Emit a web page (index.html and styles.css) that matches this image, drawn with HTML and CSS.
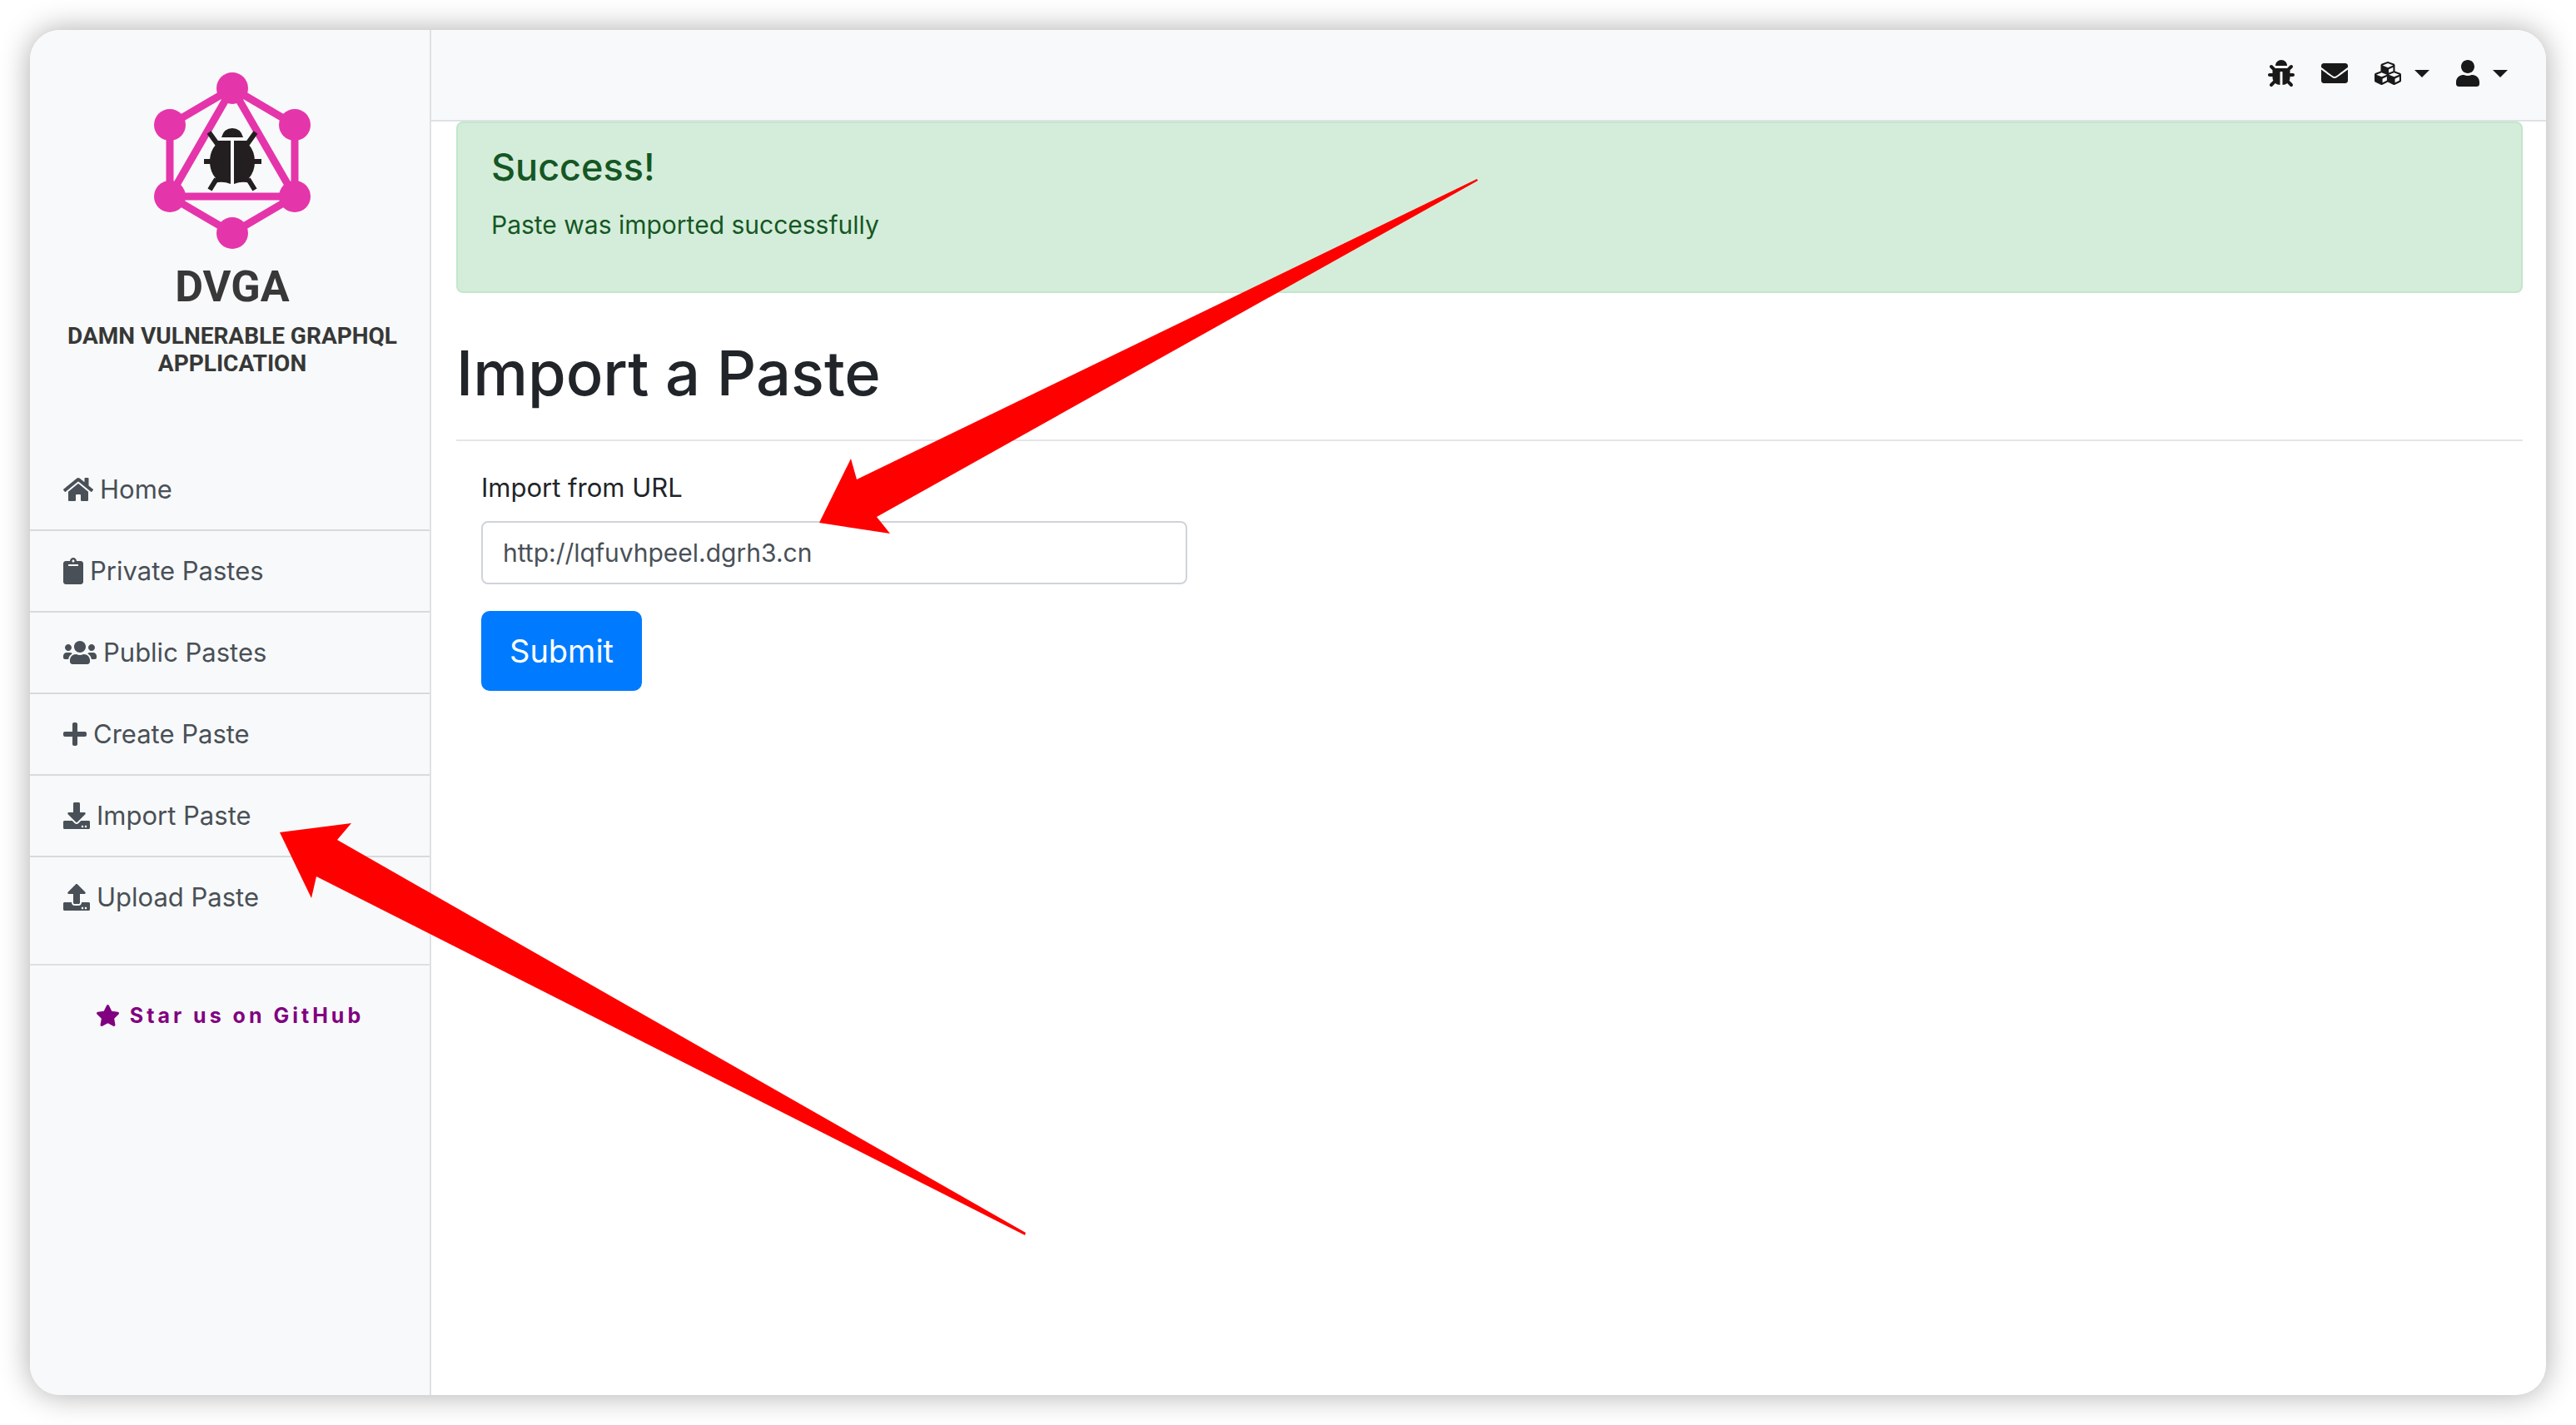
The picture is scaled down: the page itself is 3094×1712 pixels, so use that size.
FILE: index.html
```html
<!DOCTYPE html>
<html lang="en">
<head>
<meta charset="utf-8">
<title>Damn Vulnerable GraphQL Application</title>
<link rel="stylesheet" href="styles.css">
</head>
<body>
<div class="window">
  <aside class="sidebar">
    <div class="logo">
      <svg class="logo-mark" viewBox="0 0 192 216" aria-hidden="true">
        <g fill="none" stroke="#e535ab" stroke-width="9">
          <path d="M96 21 171 65V151L96 195 21 151V65Z"/>
          <path d="M96 21 171 151H21Z"/>
        </g>
        <g fill="#e535ab">
          <circle cx="96" cy="21" r="19"/><circle cx="171" cy="65" r="19"/><circle cx="171" cy="151" r="19"/>
          <circle cx="96" cy="195" r="19"/><circle cx="21" cy="151" r="19"/><circle cx="21" cy="65" r="19"/>
        </g>
        <g fill="#231f20">
          <path d="M83 80Q86 69 96 69T109 80Z"/>
          <path d="M76 84H94V136Q84 132 75 135L76 129Q69 121 69 109 69 97 76 89Z"/>
          <path d="M116 84H98V136Q108 132 117 135L116 129Q123 121 123 109 123 97 116 89Z"/>
        </g>
        <path fill="none" stroke="#231f20" stroke-width="6" d="M68 74 78 88M124 74 114 88M62 109H72M131 109H120M69 143 77 130M123 143 115 130"/>
      </svg>
      <div class="logo-name">DVGA</div>
      <div class="logo-caption">DAMN VULNERABLE GRAPHQL<br>APPLICATION</div>
    </div>
    <nav class="menu">
      <a class="menu-item" href="#"><svg class="icon w36" viewBox="0 0 576 512"><path d="M280.37 148.26L96 300.11V464a16 16 0 0 0 16 16l112.06-.29a16 16 0 0 0 15.92-16V368a16 16 0 0 1 16-16h64a16 16 0 0 1 16 16v95.64a16 16 0 0 0 16 16.05L464 480a16 16 0 0 0 16-16V300L295.67 148.26a12.19 12.19 0 0 0-15.3 0zM571.6 251.47L488 182.56V44.05a12 12 0 0 0-12-12h-56a12 12 0 0 0-12 12v72.61L318.47 43a48 48 0 0 0-61 0L4.34 251.47a12 12 0 0 0-1.6 16.9l25.5 31A12 12 0 0 0 45.15 301l235.22-193.74a12.19 12.19 0 0 1 15.3 0L530.9 301a12 12 0 0 0 16.9-1.6l25.5-31a12 12 0 0 0-1.7-16.93z"/></svg>Home</a>
      <a class="menu-item" href="#"><svg class="icon w24" viewBox="0 0 384 512"><path d="M384 112v352c0 26.51-21.49 48-48 48H48c-26.51 0-48-21.49-48-48V112c0-26.51 21.49-48 48-48h80c0-35.29 28.71-64 64-64s64 28.71 64 64h80c26.51 0 48 21.49 48 48zM192 40c-13.255 0-24 10.745-24 24s10.745 24 24 24 24-10.745 24-24-10.745-24-24-24m96 114v-20a6 6 0 0 0-6-6H102a6 6 0 0 0-6 6v20a6 6 0 0 0 6 6h180a6 6 0 0 0 6-6z"/></svg>Private Pastes</a>
      <a class="menu-item" href="#"><svg class="icon w40" viewBox="0 0 640 512"><path d="M96 224c35.3 0 64-28.7 64-64s-28.7-64-64-64-64 28.7-64 64 28.7 64 64 64zm448 0c35.3 0 64-28.7 64-64s-28.7-64-64-64-64 28.7-64 64 28.7 64 64 64zm32 32h-64c-17.6 0-33.5 7.1-45.1 18.6 40.3 22.1 68.9 62 75.1 109.4h66c17.7 0 32-14.3 32-32v-32c0-35.3-28.7-64-64-64zm-256 0c61.9 0 112-50.1 112-112S381.9 32 320 32 208 82.1 208 144s50.1 112 112 112zm76.8 32h-8.3c-20.8 10-43.9 16-68.5 16s-47.6-6-68.5-16h-8.3C179.6 288 128 339.6 128 403.2V432c0 26.5 21.5 48 48 48h288c26.5 0 48-21.5 48-48v-28.8c0-63.6-51.6-115.2-115.2-115.2zm-223.7-13.4C161.5 263.1 145.6 256 128 256H64c-35.3 0-64 28.7-64 64v32c0 17.7 14.3 32 32 32h65.9c6.3-47.4 34.9-87.3 75.2-109.4z"/></svg>Public Pastes</a>
      <a class="menu-item" href="#"><svg class="icon w28" viewBox="0 0 448 512"><path d="M416 208H272V64c0-17.67-14.33-32-32-32h-32c-17.67 0-32 14.33-32 32v144H32c-17.67 0-32 14.33-32 32v32c0 17.67 14.33 32 32 32h144v144c0 17.67 14.33 32 32 32h32c17.67 0 32-14.33 32-32V304h144c17.67 0 32-14.33 32-32v-32c0-17.67-14.33-32-32-32z"/></svg>Create Paste</a>
      <a class="menu-item" href="#"><svg class="icon w32" viewBox="0 0 512 512"><path d="M216 0h80c13.3 0 24 10.7 24 24v168h87.7c17.8 0 26.7 21.5 14.1 34.1L269.7 378.3c-7.5 7.5-19.8 7.5-27.3 0L90.1 226.1c-12.6-12.6-3.7-34.1 14.1-34.1H192V24c0-13.3 10.7-24 24-24zm296 376v112c0 13.3-10.7 24-24 24H24c-13.3 0-24-10.7-24-24V376c0-13.3 10.7-24 24-24h146.7l49 49c20.1 20.1 52.5 20.1 72.6 0l49-49H488c13.3 0 24 10.7 24 24zm-124 88c0-11-9-20-20-20s-20 9-20 20 9 20 20 20 20-9 20-20zm64 0c0-11-9-20-20-20s-20 9-20 20 9 20 20 20 20-9 20-20z"/></svg>Import Paste
        <svg class="arrow arrow-menu" viewBox="0 0 896 496" aria-hidden="true"><path d="M0 12 86 1 69 21 896 493 895 496 44 65 38 91Z"/></svg></a>
      <a class="menu-item" href="#"><svg class="icon w32" viewBox="0 0 512 512"><path d="M296 384h-80c-13.3 0-24-10.7-24-24V192h-87.7c-17.8 0-26.7-21.5-14.1-34.1L242.3 5.7c7.5-7.5 19.8-7.5 27.3 0l152.2 152.2c12.6 12.6 3.7 34.1-14.1 34.1H320v168c0 13.3-10.7 24-24 24zm216-8v112c0 13.3-10.7 24-24 24H24c-13.3 0-24-10.7-24-24V376c0-13.3 10.7-24 24-24h136v8c0 30.9 25.1 56 56 56h80c30.9 0 56-25.1 56-56v-8h136c13.3 0 24 10.7 24 24zm-124 88c0-11-9-20-20-20s-20 9-20 20 9 20 20 20 20-9 20-20zm64 0c0-11-9-20-20-20s-20 9-20 20 9 20 20 20 20-9 20-20z"/></svg>Upload Paste</a>
    </nav>
    <a class="star" href="#"><svg class="star-icon" viewBox="0 0 576 512"><path d="M259.3 17.8L194 150.2 47.9 171.5c-26.2 3.8-36.7 36.1-17.7 54.6l105.7 103-25 145.5c-4.5 26.3 23.2 46 46.4 33.7L288 439.6l130.7 68.7c23.2 12.2 50.9-7.4 46.4-33.7l-25-145.5 105.7-103c19-18.5 8.5-50.8-17.7-54.6L382 150.2 316.7 17.8c-11.7-23.6-45.6-23.9-57.4 0z"/></svg>Star us on GitHub</a>
  </aside>
  <div class="page">
    <header class="topbar">
      <a class="tool" href="#" aria-label="Report a bug"><svg class="icon w32" viewBox="0 0 512 512"><path d="M511.988 288.9c-.478 17.43-15.217 31.1-32.653 31.1H424v16c0 21.864-4.882 42.584-13.6 61.145l60.228 60.228c12.496 12.497 12.496 32.758 0 45.255-12.498 12.497-32.759 12.496-45.256 0l-54.736-54.736C345.886 467.965 314.351 480 280 480V236c0-6.627-5.373-12-12-12h-24c-6.627 0-12 5.373-12 12v244c-34.351 0-65.886-12.035-90.636-32.108l-54.736 54.736c-12.498 12.497-32.759 12.496-45.256 0-12.496-12.497-12.496-32.758 0-45.255l60.228-60.228C92.882 378.584 88 357.864 88 336v-16H32.666C15.23 320 .491 306.33.013 288.9-.484 270.816 14.028 256 32 256h56v-58.745l-46.628-46.628c-12.496-12.497-12.496-32.758 0-45.255 12.498-12.497 32.758-12.497 45.256 0L141.255 160h229.489l54.627-54.627c12.498-12.497 32.758-12.497 45.256 0 12.496 12.497 12.496 32.758 0 45.255L424 197.255V256h56c17.972 0 32.484 14.816 31.988 32.9zM257 0c-61.856 0-112 50.144-112 112h224C369 50.144 318.856 0 257 0z"/></svg></a>
      <a class="tool" href="#" aria-label="Messages"><svg class="icon w32" viewBox="0 0 512 512"><path d="M502.3 190.8c3.9-3.1 9.7-.2 9.7 4.7V400c0 26.5-21.5 48-48 48H48c-26.5 0-48-21.5-48-48V195.6c0-5 5.7-7.8 9.7-4.7 22.4 17.4 52.1 39.5 154.1 113.6 21.1 15.4 56.7 47.8 92.2 47.6 35.7.3 72-32.8 92.3-47.6 102-74.1 131.6-96.3 154-113.7zM256 320c23.2.4 56.6-29.2 73.4-41.4 132.7-96.3 142.8-104.7 173.4-128.7 5.8-4.5 9.2-11.5 9.2-18.9v-19c0-26.5-21.5-48-48-48H48c-26.5 0-48 21.5-48 48v19c0 7.4 3.4 14.3 9.2 18.9 30.6 23.9 40.7 32.4 173.4 128.7 16.8 12.2 50.2 41.8 73.4 41.4z"/></svg></a>
      <button class="tool" type="button" aria-label="Modules"><svg class="icon w32" viewBox="0 0 512 512"><path d="M488.6 250.2L392 214V105.5c0-15-9.3-28.4-23.4-33.7l-100-37.5c-8.1-3.1-17.1-3.1-25.3 0l-100 37.5c-14.1 5.3-23.4 18.7-23.4 33.7V214l-96.6 36.2C9.3 255.5 0 268.9 0 283.9V394c0 13.6 7.7 26.1 19.9 32.2l100 50c10.1 5.1 22.1 5.1 32.2 0l103.9-52 103.9 52c10.1 5.1 22.1 5.1 32.2 0l100-50c12.2-6.1 19.9-18.6 19.9-32.2V283.9c0-15-9.3-28.4-23.4-33.7zM358 214.8l-85 31.9v-68.2l85-37v73.3zM154 104.1l102-38.2 102 38.2v.6l-102 41.4-102-41.4v-.6zm84 291.1l-85 42.5v-79.1l85-38.8v75.4zm0-112l-102 41.4-102-41.4v-.6l102-38.2 102 38.2v.6zm240 112l-85 42.5v-79.1l85-38.8v75.4zm0-112l-102 41.4-102-41.4v-.6l102-38.2 102 38.2v.6z"/></svg><span class="caret"></span></button>
      <button class="tool" type="button" aria-label="Account"><svg class="icon w28" viewBox="0 0 448 512"><path d="M224 256c70.7 0 128-57.3 128-128S294.7 0 224 0 96 57.3 96 128s57.3 128 128 128zm89.6 32h-16.7c-22.2 10.2-46.9 16-72.9 16s-50.6-5.8-72.9-16h-16.7C60.2 288 0 348.2 0 422.4V464c0 26.5 21.5 48 48 48h352c26.5 0 48-21.5 48-48v-41.6c0-74.2-60.2-134.4-134.4-134.4z"/></svg><span class="caret"></span></button>
    </header>
    <main class="content">
      <div class="alert" role="alert">
        <h4 class="alert-title">Success!</h4>
        <p class="alert-text">Paste was imported successfully</p>
      </div>
      <h1 class="title">Import a Paste</h1>
      <form class="form">
        <label class="label" for="url">Import from URL</label>
        <div class="field">
          <input class="input" id="url" type="text" value="http://lqfuvhpeel.dgrh3.cn">
          <svg class="arrow arrow-field" viewBox="0 0 792 426" aria-hidden="true"><path d="M0 413 38 336 45 361 790 0 791 2 69 406 85 426Z"/></svg>
        </div>
        <button class="submit" type="submit">Submit</button>
      </form>
    </main>
  </div>
</div>
</body>
</html>
```
FILE: styles.css
```css
* {
  box-sizing: border-box;
}

body {
  margin: 0;
  padding: 36px;
  min-height: 100vh;
  display: flex;
  background: #fff;
  color: #212529;
  font-family: Inter, "Liberation Sans", sans-serif;
  font-size: 31px;
  line-height: 48px;
}

.window {
  flex: 1;
  display: flex;
  min-width: 0;
  overflow: hidden;
  background: #fff;
  border-radius: 36px;
  box-shadow: 0 0 36px rgba(0, 0, 0, 0.33);
}

/* Sidebar */
.sidebar {
  flex: none;
  width: 482px;
  background: #f8f9fa;
  border-right: 2px solid #dee2e6;
}

.logo {
  display: flex;
  flex-direction: column;
  align-items: center;
  padding: 49px 0 87px 6px;
  color: #373837;
  font-family: Roboto, "Liberation Sans", sans-serif;
  font-weight: 700;
  text-align: center;
}

.logo-mark {
  width: 192px;
  height: 216px;
}

.logo-name {
  margin-top: 16px;
  font-size: 52px;
  line-height: 56px;
}

.logo-caption {
  margin-top: 14px;
  font-size: 28px;
  line-height: 33px;
}

.menu {
  padding-bottom: 32px;
  border-bottom: 2px solid #dfe0e2;
}

.menu-item {
  position: relative;
  display: flex;
  align-items: center;
  gap: 8px;
  padding: 24px 40px;
  color: #495057;
  text-decoration: none;
}

.menu-item + .menu-item {
  border-top: 2px solid #d9dadc;
}

.icon {
  flex: none;
  height: 32px;
  fill: currentColor;
}

.w24 { width: 24px; }
.w28 { width: 28px; }
.w32 { width: 32px; }
.w36 { width: 36px; }
.w40 { width: 40px; }

.star {
  display: flex;
  align-items: center;
  justify-content: center;
  gap: 12px;
  padding: 36px 0;
  color: purple;
  font-size: 25px;
  font-weight: 700;
  letter-spacing: 4px;
  text-decoration: none;
}

.star-icon {
  width: 29px;
  height: 26px;
  fill: currentColor;
}

/* Top bar */
.page {
  flex: 1;
  min-width: 0;
}

.topbar {
  display: flex;
  justify-content: flex-end;
  gap: 32px;
  padding: 36px 46px 40px;
  background: #f8f9fa;
  border-bottom: 2px solid #dee2e6;
}

.tool {
  display: flex;
  align-items: center;
  gap: 16px;
  padding: 0;
  border: 0;
  background: none;
  color: #191919;
}

.caret {
  border: 9px solid transparent;
  border-top-color: currentColor;
  border-bottom: 0;
}

/* Content */
.content {
  padding: 0 28px 0 30px;
}

.alert {
  padding: 24px 40px;
  border: 2px solid #c3e6cb;
  border-radius: 8px;
  background: #d4edda;
  color: #155724;
}

.alert-title {
  margin: 0 0 16px;
  font-size: 45px;
  font-weight: 500;
  line-height: 58px;
}

.alert-text {
  margin: 0 0 32px;
  font-size: 30px;
}

.title {
  margin: 48px 0 32px;
  font-size: 74px;
  font-weight: 500;
  line-height: 96px;
}

.form {
  padding: 32px 30px;
  border-top: 2px solid #e5e5e5;
}

.label {
  display: block;
  margin-bottom: 16px;
}

.field {
  position: relative;
  width: 35%;
  margin-bottom: 32px;
}

.input {
  display: block;
  width: 100%;
  height: 76px;
  padding: 12px 24px;
  border: 2px solid #ced4da;
  border-radius: 8px;
  background: #fff;
  color: #495057;
  font: inherit;
  font-size: 30px;
}

.submit {
  display: block;
  padding: 16px 32px;
  border: 2px solid #007bff;
  border-radius: 10px;
  background: #007bff;
  color: #fff;
  font-family: inherit;
  font-size: 38px;
  line-height: 60px;
}

/* Pointer arrows drawn over the page */
.arrow {
  position: absolute;
  z-index: 2;
  fill: #f00;
  pointer-events: none;
}

.arrow-menu {
  left: 300px;
  top: 56px;
  width: 896px;
  height: 496px;
}

.arrow-field {
  left: 406px;
  bottom: 61px;
  width: 792px;
  height: 426px;
}
```
